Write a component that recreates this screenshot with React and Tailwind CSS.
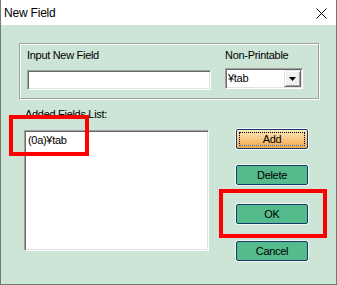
import React from 'react';

const sunken =
  'border border-t-[#a0a0a0] border-l-[#a0a0a0] border-r-white border-b-white shadow-[inset_1px_1px_0_#696969,inset_-1px_-1px_0_#e3e3e3] bg-white';

function Btn({ children, focused, className = '' }) {
  if (focused) {
    return (
      <div className={`relative w-[72px] h-[20px] rounded-[2px] border border-[#173a6e] bg-gradient-to-b from-[#fde8bd] to-[#f1a843] flex items-center justify-center shadow-[0_0_0_1px_rgba(255,255,255,0.7)] ${className}`}>
        <span className="absolute inset-[2px] border border-dotted border-black border-b-[#2f6fd6]" />
        <span>{children}</span>
      </div>
    );
  }
  return (
    <div className={`w-[72px] h-[20px] rounded-[2px] border border-[#173a6e] bg-[#56bb8c] flex items-center justify-center shadow-[0_0_0_1px_rgba(255,255,255,0.7)] ${className}`}>
      {children}
    </div>
  );
}

export default function App() {
  return (
    <div className="relative w-[337px] h-[285px] bg-[#cce5d6] border-x border-b border-[#6f7a72] overflow-hidden text-black font-['Liberation_Sans',Arial,sans-serif] text-[11px] leading-[13px] tracking-[-0.3px]">
      {/* title bar */}
      <div className="h-[25px] bg-white flex items-center justify-between pl-[3px] pr-[9px]">
        <span className="text-[12px] leading-[14px] tracking-[-0.2px]">New Field</span>
        <svg width="11" height="11" viewBox="0 0 11 11" className="mt-[1px]">
          <path d="M0.5 0.5 L10.5 10.5 M10.5 0.5 L0.5 10.5" stroke="#000" strokeWidth="1" />
        </svg>
      </div>

      {/* group box */}
      <div className="ml-[18px] mt-[18px] w-[300px] h-[56px] border border-[#a0a0a0] shadow-[inset_1px_1px_0_#fff,1px_1px_0_#fff] pl-[7px] pt-[5px] flex">
        <div className="w-[184px] flex flex-col">
          <span>Input New Field</span>
          <div className={`mt-[8px] h-[20px] ${sunken}`} />
        </div>
        <div className="ml-[14px] w-[78px] flex flex-col">
          <span>Non-Printable</span>
          <div className={`mt-[6px] h-[21px] flex p-[1px] ${sunken}`}>
            <span className="flex-1 pl-[1px] leading-[17px]">¥tab</span>
            <div className="w-[17px] bg-[#f0f0f0] border border-t-[#e3e3e3] border-l-[#e3e3e3] border-r-[#696969] border-b-[#696969] shadow-[inset_1px_1px_0_#fff,inset_-1px_-1px_0_#a0a0a0] flex items-center justify-center">
              <svg width="7" height="4" viewBox="0 0 7 4">
                <polygon points="0,0 7,0 3.5,4" fill="#000" />
              </svg>
            </div>
          </div>
        </div>
      </div>

      {/* list + buttons */}
      <div className="mt-[9px] flex items-start">
        <div className="ml-[23px] w-[185px] flex flex-col">
          <span className="pl-[1px]">Added Fields List:</span>
          <div className={`mt-[9px] h-[121px] pt-[3px] pl-[3px] ${sunken}`}>
            <div>(0a)¥tab</div>
          </div>
        </div>
        <div className="ml-[27px] pt-[21px] flex flex-col">
          <Btn focused>Add</Btn>
          <Btn className="mt-[16px]">Delete</Btn>
          <Btn className="mt-[19px]">OK</Btn>
          <Btn className="mt-[17px]">Cancel</Btn>
        </div>
      </div>

      {/* red annotation boxes */}
      <div className="absolute left-[8px] top-[115px] w-[80px] h-[41px] border-4 border-[#ff0000]" />
      <div className="absolute left-[218px] top-[189px] w-[108px] h-[49px] border-4 border-[#ff0000]" />
    </div>
  );
}
